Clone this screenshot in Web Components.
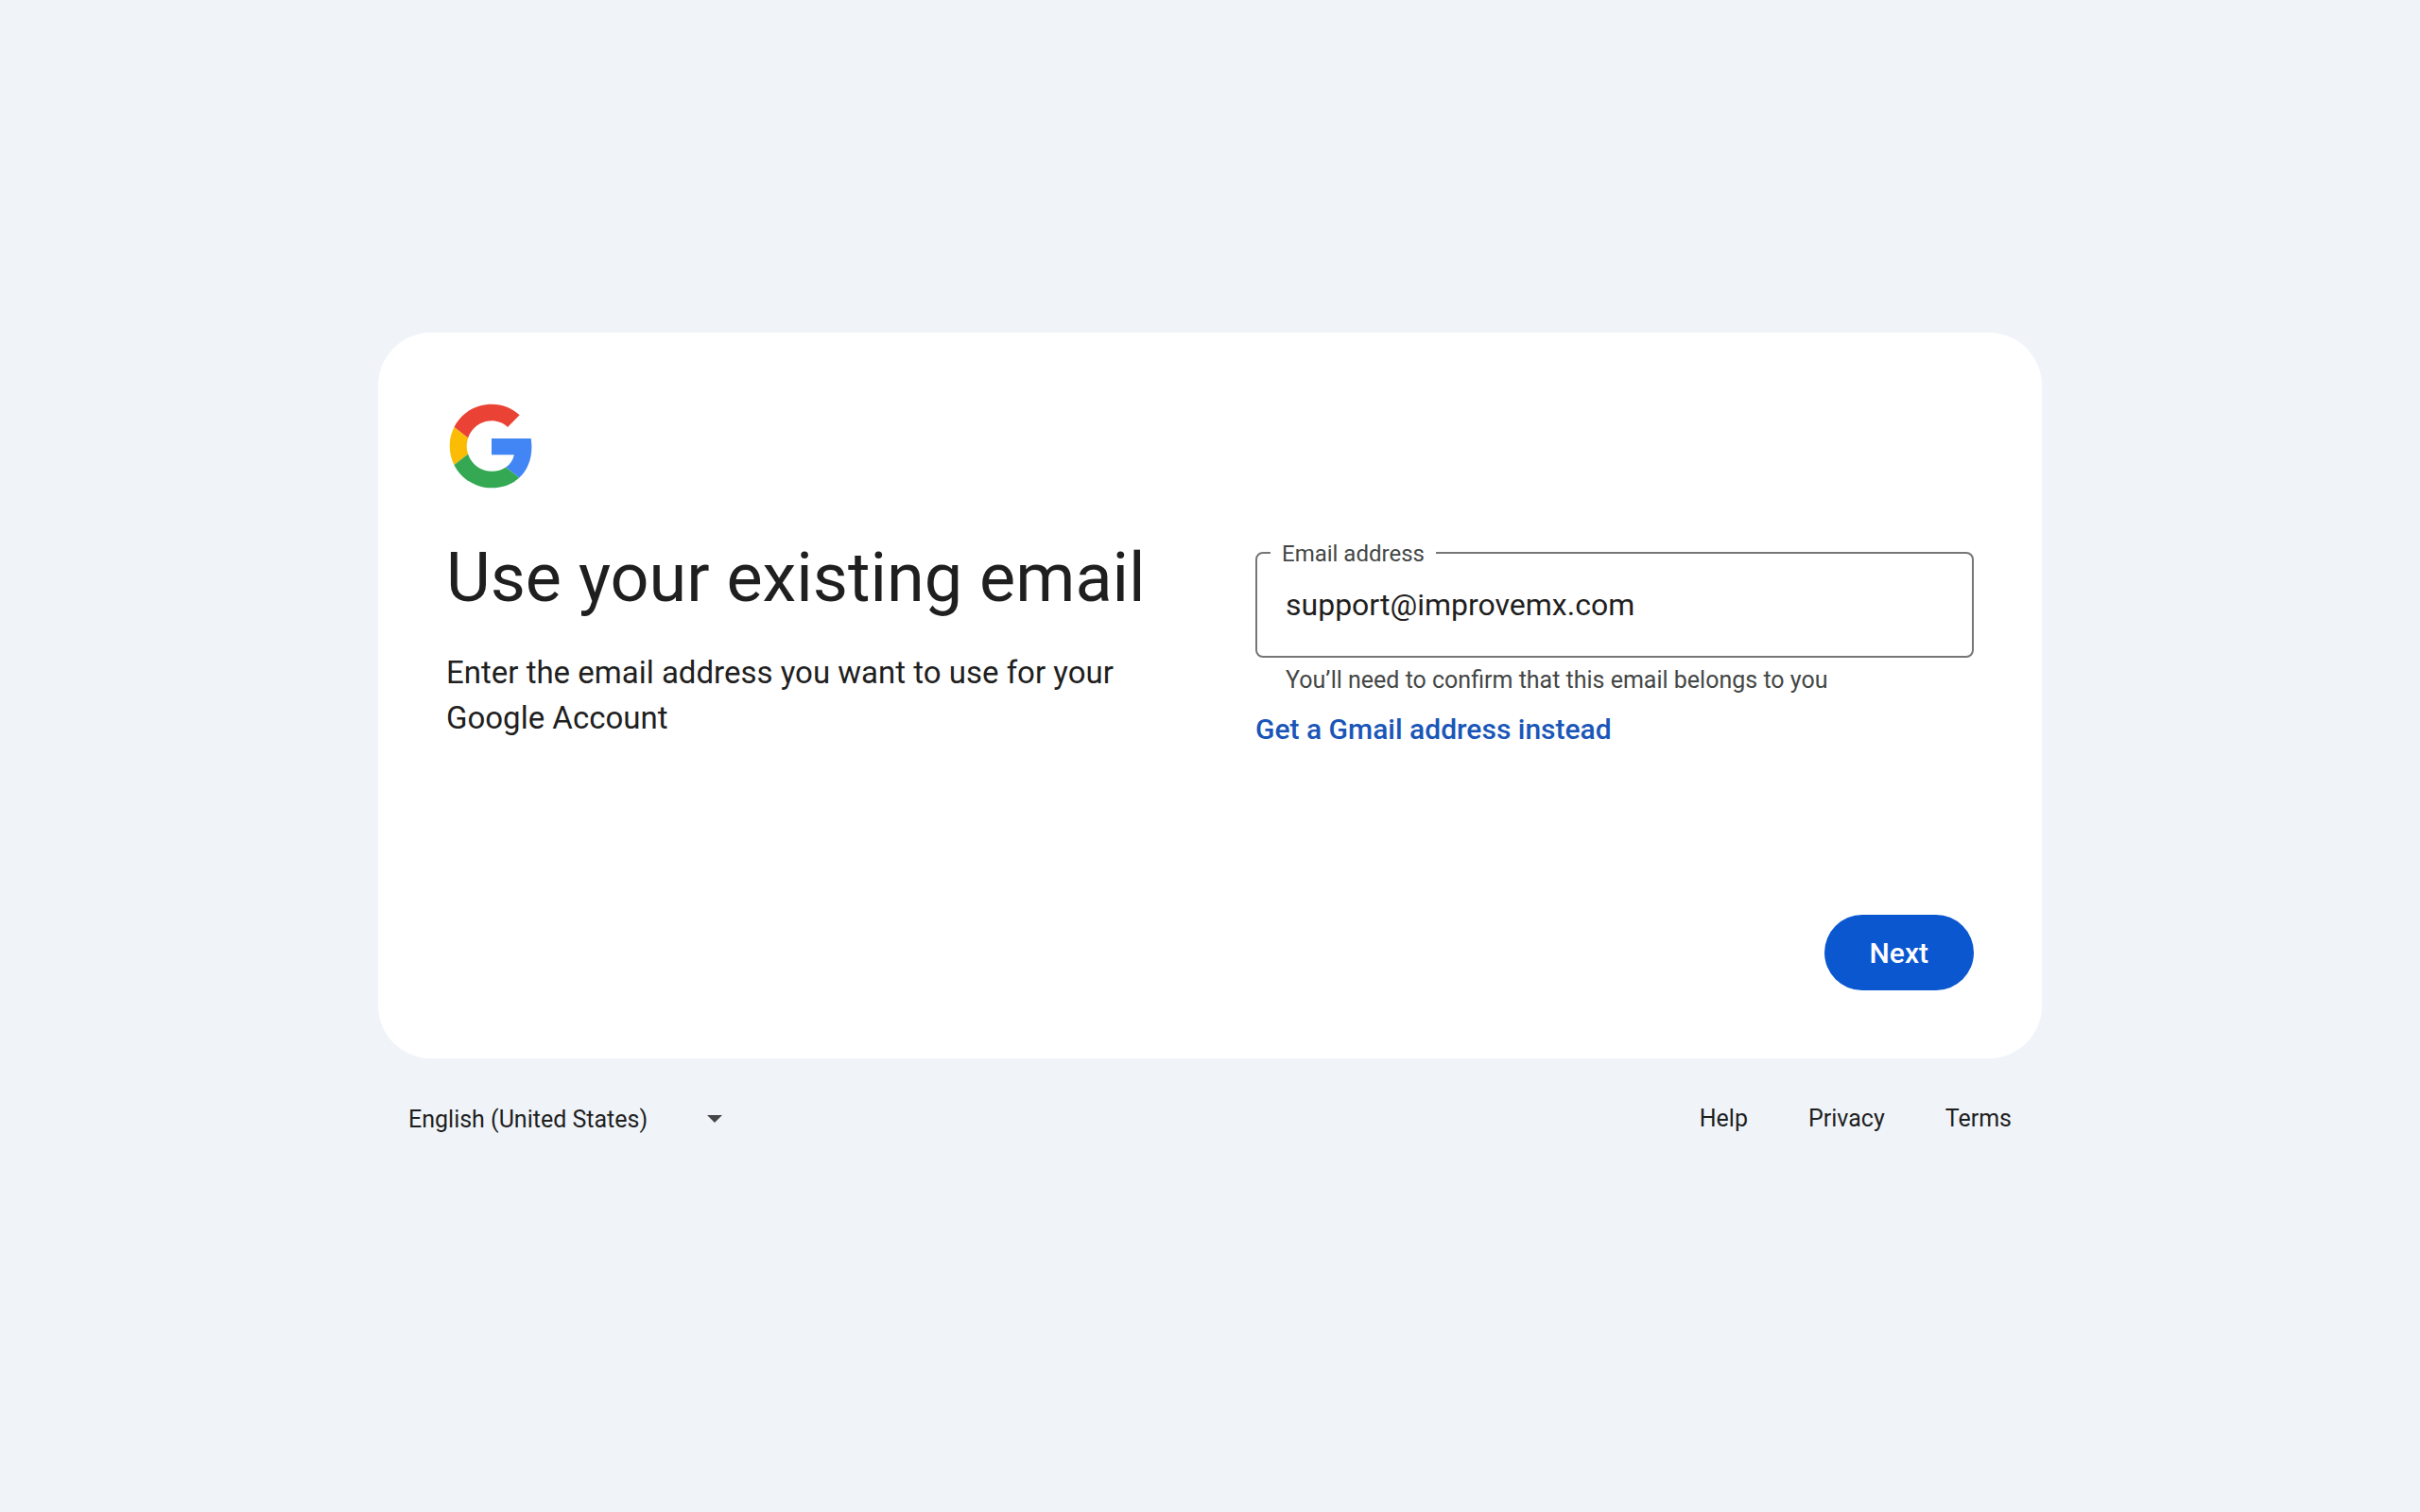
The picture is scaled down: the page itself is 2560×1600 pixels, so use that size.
<!DOCTYPE html>
<html lang="en">
<head>
<meta charset="utf-8">
<title>Use your existing email</title>
<style>
  body { margin: 0; background: #f0f4f9; font-family: Roboto, "Liberation Sans", sans-serif; color: #1f1f1f; }
</style>
</head>
<body>
<account-page>
  <account-card>
    <google-logo slot="logo"></google-logo>
    <card-intro slot="intro">
      <span slot="title">Use your existing email</span>
      Enter the email address you want to use for your Google Account
    </card-intro>
    <outlined-field slot="form" label="Email address" type="email" value="support@improvemx.com">You’ll need to confirm that this email belongs to you</outlined-field>
    <text-link slot="form" class="accent" href="#gmail">Get a Gmail address instead</text-link>
    <filled-button slot="actions">Next</filled-button>
  </account-card>
  <page-footer slot="footer">
    <language-select slot="language"></language-select>
    <text-link href="#help">Help</text-link>
    <text-link href="#privacy">Privacy</text-link>
    <text-link href="#terms">Terms</text-link>
  </page-footer>
</account-page>

<script>
function define(name, html, setup) {
  const template = document.createElement('template');
  template.innerHTML = html;
  customElements.define(name, class extends HTMLElement {
    constructor() {
      super();
      this.attachShadow({ mode: 'open' }).append(template.content.cloneNode(true));
    }
    connectedCallback() {
      if (setup) setup(this, this.shadowRoot);
    }
  });
}

define('account-page', `
  <style>
    :host { display: flex; flex-direction: column; align-items: center; justify-content: center; min-height: 100vh; }
    .column { width: 100%; max-width: 1760px; }
  </style>
  <div class="column"><main><slot></slot></main><slot name="footer"></slot></div>
`);

define('account-card', `
  <style>
    :host { display: flex; flex-direction: column; box-sizing: border-box; min-height: 768px; padding: 72px; background: #fff; border-radius: 56px; }
    .columns { display: grid; grid-template-columns: 1fr 1fr; gap: 96px; margin-top: 48px; }
    .form { display: flex; flex-direction: column; align-items: stretch; gap: 16px; padding-top: 16px; }
    .actions { display: flex; justify-content: flex-end; margin-top: auto; }
  </style>
  <slot name="logo"></slot>
  <div class="columns">
    <slot name="intro"></slot>
    <div class="form"><slot name="form"></slot></div>
  </div>
  <div class="actions"><slot name="actions"></slot></div>
`);

define('google-logo', `
  <style>
    :host { display: block; }
    svg { display: block; width: 96px; height: 96px; }
  </style>
  <svg viewBox="-2 -2 52 52" role="img" aria-label="Google">
    <path fill="#ea4335" d="M24 9.5c3.54 0 6.71 1.22 9.21 3.6l6.85-6.85C35.9 2.38 30.47 0 24 0 14.62 0 6.51 5.38 2.56 13.22l7.98 6.19C12.43 13.72 17.74 9.5 24 9.5z"/>
    <path fill="#4285f4" d="M46.98 24.55c0-1.57-.15-3.09-.38-4.9H24v9.37h12.94c-.58 2.96-2.26 5.48-4.78 7.18l7.73 6c4.51-4.18 7.09-10.36 7.09-17.65z"/>
    <path fill="#fbbc05" d="M10.53 28.59c-.48-1.45-.76-2.99-.76-4.59s.27-3.14.76-4.59l-7.98-6.19C.92 16.46 0 20.12 0 24c0 3.88.92 7.54 2.56 10.78l7.97-6.19z"/>
    <path fill="#34a853" d="M24 48c6.48 0 11.93-2.13 15.89-5.81l-7.73-6c-2.15 1.45-4.92 2.3-8.16 2.3-6.26 0-11.57-4.22-13.47-9.91l-7.98 6.19C6.51 42.62 14.62 48 24 48z"/>
  </svg>
`);

define('card-intro', `
  <style>
    :host { display: block; }
    h1 { margin: 0; font-size: 72px; line-height: 88px; font-weight: 400; }
    p { margin: 32px 0 0; font-size: 33px; line-height: 48px; }
  </style>
  <h1><slot name="title"></slot></h1>
  <p><slot></slot></p>
`);

define('outlined-field', `
  <style>
    :host { display: block; }
    .box { position: relative; }
    input { display: block; box-sizing: border-box; width: 100%; height: 112px; padding: 0 30px; border: 2px solid #747775; border-radius: 8px; background: transparent; color: #1f1f1f; font: inherit; font-size: 32px; outline: none; }
    input:focus { border-color: #0b57d0; }
    label { position: absolute; left: 16px; top: -14px; padding: 0 12px; background: #fff; color: #444746; font-size: 24px; line-height: 32px; }
    .hint { margin: 8px 32px 0; color: #444746; font-size: 25px; line-height: 32px; }
  </style>
  <div class="box">
    <input id="field" aria-describedby="hint">
    <label for="field"></label>
  </div>
  <div class="hint" id="hint"><slot></slot></div>
`, (host, root) => {
  const input = root.querySelector('input');
  input.type = host.getAttribute('type') || 'text';
  input.value = host.getAttribute('value') || '';
  root.querySelector('label').textContent = host.getAttribute('label');
});

define('text-link', `
  <style>
    :host { display: block; font-size: 25px; line-height: 32px; }
    :host(.accent) { color: #1a56b8; font-size: 30px; line-height: 40px; font-weight: 500; }
    a { color: inherit; text-decoration: none; }
    a:hover { text-decoration: underline; }
  </style>
  <a><slot></slot></a>
`, (host, root) => {
  root.querySelector('a').href = host.getAttribute('href');
});

define('filled-button', `
  <style>
    :host { display: block; }
    button { display: block; height: 80px; padding: 0 48px; border: 0; border-radius: 40px; background: #0b57d0; color: #fff; font: inherit; font-size: 30px; font-weight: 500; cursor: pointer; }
  </style>
  <button type="button"><slot></slot></button>
`);

define('page-footer', `
  <style>
    :host { display: block; }
    footer { display: flex; align-items: center; justify-content: space-between; min-height: 128px; padding: 0 32px; }
    nav { display: flex; gap: 64px; }
  </style>
  <footer><slot name="language"></slot><nav><slot></slot></nav></footer>
`);

define('language-select', `
  <style>
    :host { display: grid; width: 332px; align-items: center; }
    select, svg { grid-area: 1 / 1; }
    select { appearance: none; width: 100%; height: 48px; padding: 0; border: 0; background: transparent; color: #1f1f1f; font: inherit; font-size: 25px; }
    svg { justify-self: end; width: 16px; height: 8px; pointer-events: none; }
  </style>
  <select aria-label="Language"><option>English (United States)</option></select>
  <svg viewBox="0 0 16 8" aria-hidden="true"><path fill="#444746" d="M0 0h16L8 8z"/></svg>
`);
</script>
</body>
</html>
